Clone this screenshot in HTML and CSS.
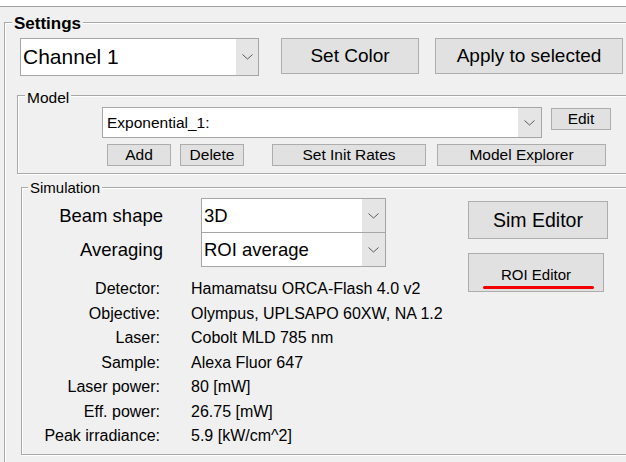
FILE: index.html
```html
<!DOCTYPE html>
<html>
<head>
<meta charset="utf-8">
<link rel="stylesheet" href="styles.css">
</head>
<body>
<div class="topbar"></div>
<div class="panel">
  <section class="group settings">
    <span class="legend legend-settings">Settings</span>
    <div class="row-main">
      <div class="combo combo-channel">
        <span class="combo-text">Channel 1</span>
        <span class="combo-btn"><svg width="11" height="6" viewBox="0 0 11 6"><polyline points="0.5,0.5 5.5,5 10.5,0.5" fill="none" stroke="#5a5a5a" stroke-width="1"/></svg></span>
      </div>
      <button class="btn btn-setcolor">Set Color</button>
      <button class="btn btn-apply">Apply to selected</button>
    </div>

    <section class="group model">
      <span class="legend legend-model">Model</span>
      <div class="model-row1">
        <div class="combo combo-model">
          <span class="combo-text">Exponential_1:</span>
          <span class="combo-btn"><svg width="11" height="6" viewBox="0 0 11 6"><polyline points="0.5,0.5 5.5,5 10.5,0.5" fill="none" stroke="#5a5a5a" stroke-width="1"/></svg></span>
        </div>
        <button class="btn btn-sm btn-edit">Edit</button>
      </div>
      <div class="model-row2">
        <button class="btn btn-sm btn-add">Add</button>
        <button class="btn btn-sm btn-delete">Delete</button>
        <button class="btn btn-sm btn-rates">Set Init Rates</button>
        <button class="btn btn-sm btn-explorer">Model Explorer</button>
      </div>
    </section>

    <section class="group simulation">
      <span class="legend legend-sim">Simulation</span>
      <div class="sim-body">
        <div class="sim-left">
          <div class="sim-combo-row">
            <span class="sim-combo-label">Beam shape</span>
            <div class="combo combo-sim">
              <span class="combo-text">3D</span>
              <span class="combo-btn"><svg width="11" height="6" viewBox="0 0 11 6"><polyline points="0.5,0.5 5.5,5 10.5,0.5" fill="none" stroke="#5a5a5a" stroke-width="1"/></svg></span>
            </div>
          </div>
          <div class="sim-combo-row sim-combo-row2">
            <span class="sim-combo-label">Averaging</span>
            <div class="combo combo-sim">
              <span class="combo-text">ROI average</span>
              <span class="combo-btn"><svg width="11" height="6" viewBox="0 0 11 6"><polyline points="0.5,0.5 5.5,5 10.5,0.5" fill="none" stroke="#5a5a5a" stroke-width="1"/></svg></span>
            </div>
          </div>
          <div class="details">
            <div class="detail"><span class="d-label">Detector:</span><span class="d-value">Hamamatsu ORCA-Flash 4.0 v2</span></div>
            <div class="detail"><span class="d-label">Objective:</span><span class="d-value">Olympus, UPLSAPO 60XW, NA 1.2</span></div>
            <div class="detail"><span class="d-label">Laser:</span><span class="d-value">Cobolt MLD 785 nm</span></div>
            <div class="detail"><span class="d-label">Sample:</span><span class="d-value">Alexa Fluor 647</span></div>
            <div class="detail"><span class="d-label">Laser power:</span><span class="d-value">80 [mW]</span></div>
            <div class="detail"><span class="d-label">Eff. power:</span><span class="d-value">26.75 [mW]</span></div>
            <div class="detail"><span class="d-label">Peak irradiance:</span><span class="d-value">5.9 [kW/cm^2]</span></div>
          </div>
        </div>
        <div class="sim-right">
          <button class="btn btn-simeditor">Sim Editor</button>
          <button class="btn btn-roi">ROI Editor<span class="red-mark"></span></button>
        </div>
      </div>
    </section>
  </section>
</div>
</body>
</html>
```

FILE: styles.css
```css
html, body {
  margin: 0;
  padding: 0;
  overflow: hidden;
  background: #f0f0f0;
  font-family: "Liberation Sans", Arial, sans-serif;
  color: #000;
}

.topbar {
  height: 6px;
  background: #fff;
  border-bottom: 1px solid #a0a0a0;
}

.panel {
  background: #f0f0f0;
  padding-top: 15px;
  height: 440px;
  overflow: hidden;
}

.group {
  position: relative;
  border: 1px solid #a9a9a9;
  box-shadow: inset 1px 1px 0 #fff, 1px 1px 0 #fff;
}

.legend {
  position: absolute;
  background: #f0f0f0;
  padding: 0 2px;
  white-space: nowrap;
}

.legend-settings {
  left: 7px;
  top: -9px;
  font-size: 17px;
  font-weight: bold;
  line-height: 20px;
}

.legend-model {
  left: 7px;
  top: -7px;
  font-size: 15.5px;
  line-height: 18px;
}

.legend-sim {
  left: 6px;
  top: -9px;
  font-size: 15px;
  line-height: 18px;
}

.settings {
  margin-left: 4px;
  margin-right: -30px;
  padding: 15px 0 40px 12px;
}

.row-main {
  display: flex;
  align-items: flex-start;
  padding-left: 3px;
}

/* combo boxes */
.combo {
  box-sizing: border-box;
  display: flex;
  align-items: stretch;
  background: #fff;
  border: 1px solid #a6a6a6;
  flex: none;
}

.combo-text {
  flex: 1;
  display: flex;
  align-items: center;
  white-space: nowrap;
}

.combo-btn {
  flex: none;
  background: #e5e5e5;
  display: flex;
  align-items: center;
  justify-content: center;
}

.combo-channel {
  width: 239px;
  height: 38px;
  font-size: 21px;
}

.combo-channel .combo-text {
  padding-left: 2px;
}

.combo-channel .combo-btn {
  width: 22px;
}

/* buttons */
.btn {
  box-sizing: border-box;
  flex: none;
  display: block;
  position: relative;
  margin: 0;
  padding: 0;
  background: #e1e1e1;
  border: 1px solid #adadad;
  border-radius: 0;
  font-family: "Liberation Sans", Arial, sans-serif;
  color: #000;
  text-align: center;
  white-space: nowrap;
}

.btn-setcolor {
  margin-left: 22px;
  width: 138px;
  height: 36px;
  font-size: 19px;
}

.btn-apply {
  margin-left: 16px;
  width: 188px;
  height: 36px;
  font-size: 19px;
}

.btn-sm {
  height: 22px;
  font-size: 15.5px;
  line-height: 20px;
}

/* model */
.model {
  margin-top: 19px;
  padding: 11px 0 7px 84px;
}

.model-row1 {
  display: flex;
  align-items: flex-start;
}

.combo-model {
  width: 440px;
  height: 31px;
  font-size: 15.5px;
}

.combo-model .combo-text {
  padding-left: 4px;
}

.combo-model .combo-btn {
  width: 23px;
}

.btn-edit {
  margin-left: 9px;
  margin-top: 1px;
  width: 60px;
}

.model-row2 {
  display: flex;
  margin-top: 6px;
  padding-left: 5px;
}

.btn-add {
  width: 64px;
}

.btn-delete {
  margin-left: 9px;
  width: 64px;
}

.btn-rates {
  margin-left: 28px;
  width: 154px;
}

.btn-explorer {
  margin-left: 11px;
  width: 169px;
}

/* simulation */
.simulation {
  margin-top: 13px;
  margin-left: 4px;
  padding: 10px 0 5px 0;
}

.sim-body {
  display: flex;
  align-items: flex-start;
}

.sim-left {
  width: 426px;
  flex: none;
}

.sim-combo-row {
  display: flex;
  align-items: center;
}

.sim-combo-row2 {
  margin-top: -1px;
}

.sim-combo-label {
  width: 141px;
  margin-right: 38px;
  text-align: right;
  font-size: 18.5px;
  white-space: nowrap;
}

.combo-sim {
  width: 185px;
  height: 35px;
  font-size: 18.5px;
}

.combo-sim .combo-text {
  padding-left: 2px;
}

.combo-sim .combo-btn {
  width: 23px;
}

.details {
  margin-top: 10px;
}

.detail {
  display: flex;
  height: 24.5px;
  align-items: center;
  font-size: 16px;
  white-space: nowrap;
}

.d-label {
  width: 138px;
  margin-right: 31px;
  text-align: right;
}

.sim-right {
  margin-left: 20px;
  padding-top: 3px;
  display: flex;
  flex-direction: column;
  align-items: flex-start;
}

.btn-simeditor {
  width: 140px;
  height: 38px;
  font-size: 19.5px;
}

.btn-roi {
  margin-top: 14px;
  width: 136px;
  height: 39px;
  font-size: 15px;
  padding-top: 3px;
}

.red-mark {
  position: absolute;
  left: 14px;
  top: 32px;
  width: 111px;
  height: 2.5px;
  border-radius: 2px;
  background: #f20000;
}
```
